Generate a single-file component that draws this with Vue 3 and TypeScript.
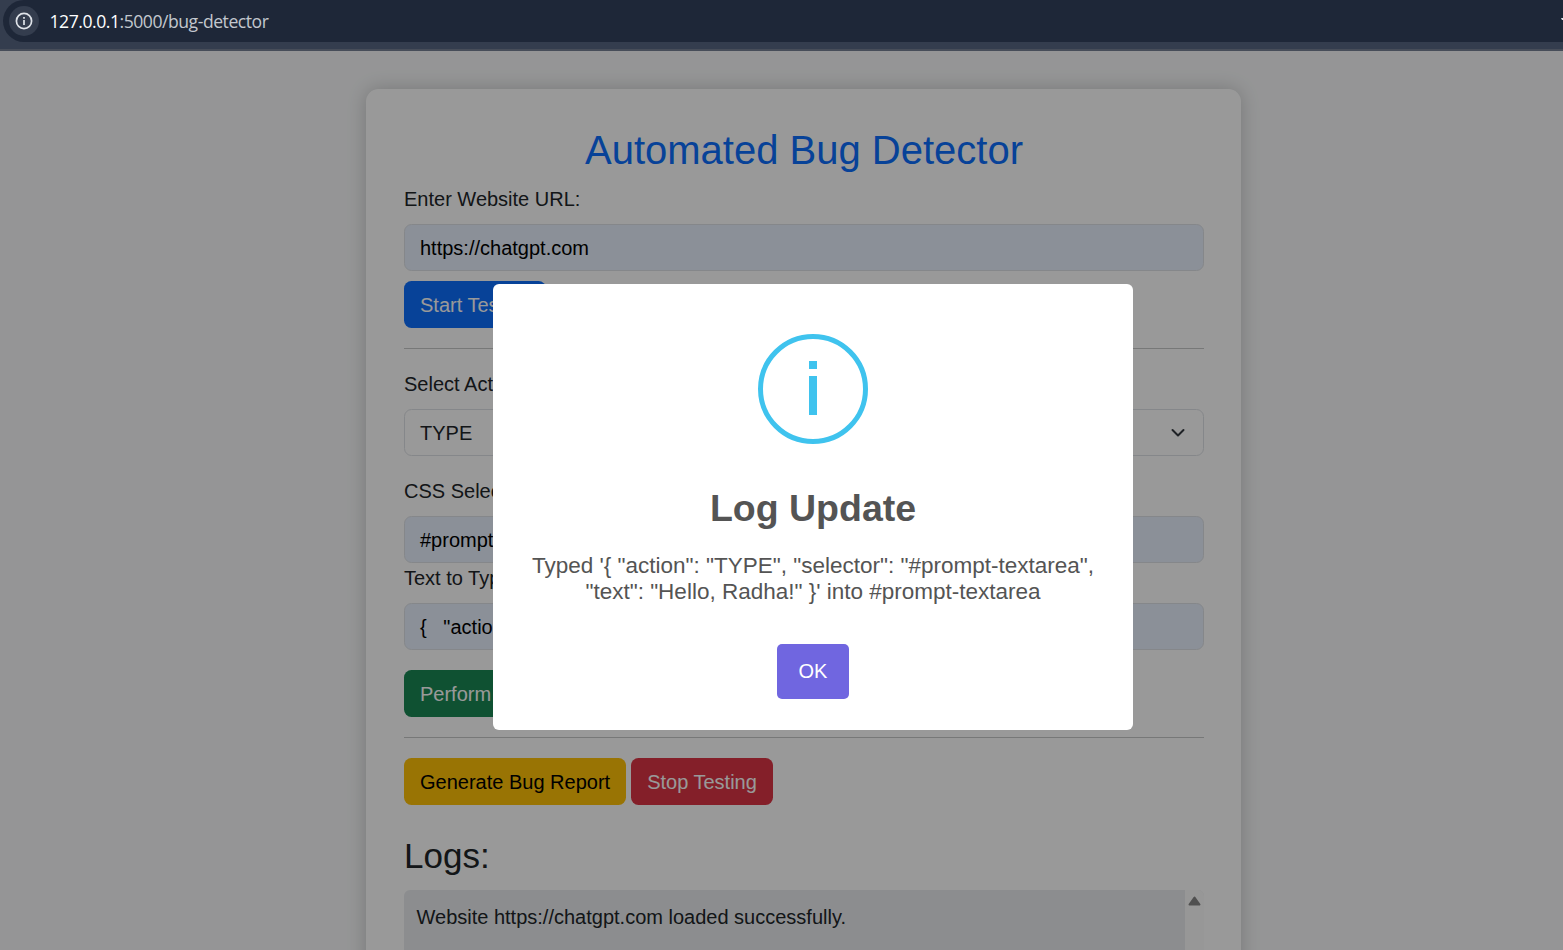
<script setup lang="ts">
const fields = {
  url: 'https://chatgpt.com',
  action: 'TYPE',
  selector: '#prompt-textarea',
  text: '{   "action": "TYPE",   "selector": "#prompt-textarea",   "text": "Hello, Radha!" }',
}
const logs: string[] = ['Website https://chatgpt.com loaded successfully.']
</script>

<template>
  <div class="screen">
    <header class="bar">
      <div class="omnibox">
        <span class="site-info">
          <svg width="18" height="18" viewBox="0 0 18 18" fill="none">
            <circle cx="9" cy="9" r="7.6" stroke="#dfe3e9" stroke-width="1.7" />
            <path d="M9 8v5M9 5v1.8" stroke="#dfe3e9" stroke-width="1.7" />
          </svg>
        </span>
        <span class="address"><span class="host">127.0.0.1</span>:5000/bug-detector</span>
        <svg class="star" width="2" height="3" viewBox="0 0 2 3"><path d="M0 0h2v2H1z" fill="#dfe3e9" /></svg>
      </div>
    </header>

    <main class="page">
      <section class="card">
        <h1>Automated Bug Detector</h1>
        <label>Enter Website URL:</label>
        <div class="control filled">{{ fields.url }}</div>
        <button class="btn primary">Start Testing</button>
        <hr />
        <label>Select Action:</label>
        <div class="control select">
          {{ fields.action }}
          <svg width="20" height="20" viewBox="0 0 20 20" fill="none" stroke="#343a40" stroke-width="2" stroke-linecap="round" stroke-linejoin="round">
            <path d="m4.5 7 5.5 5.5L15.500 7" />
          </svg>
        </div>
        <label class="spaced">CSS Selector:</label>
        <div class="control filled">{{ fields.selector }}</div>
        <label>Text to Type:</label>
        <div class="control filled">{{ fields.text }}</div>
        <button class="btn success">Perform Action</button>
        <hr />
        <div class="actions">
          <button class="btn warning">Generate Bug Report</button>
          <button class="btn danger">Stop Testing</button>
        </div>
        <h3>Logs:</h3>
        <div class="logs">
          <div class="log-list"><p v-for="line in logs" :key="line">{{ line }}</p></div>
          <div class="scroll">
            <svg width="13" height="10" viewBox="0 0 13 10"><path d="M6.5 1.500 11.500 8.500H1.500z" fill="#858585" stroke="#858585" stroke-width="2" stroke-linejoin="round" /></svg>
          </div>
        </div>
      </section>

      <div class="overlay">
        <div class="dialog">
          <div class="info-ring"><span class="info-mark"></span></div>
          <h2>Log Update</h2>
          <p class="message">Typed '{ "action": "TYPE", "selector": "#prompt-textarea",<br />"text": "Hello, Radha!" }' into #prompt-textarea</p>
          <button class="ok">OK</button>
        </div>
      </div>
    </main>
  </div>
</template>

<style>
body { margin: 0; overflow: hidden; }
</style>

<style scoped>
* { box-sizing: border-box; }
.screen {
  width: 1563px;
  height: 950px;
  overflow: hidden;
  display: flex;
  flex-direction: column;
  font: 20px/30px "Liberation Sans", Arial, sans-serif;
  color: #212529;
}
.bar {
  height: 51px;
  flex: none;
  background: #343d4e;
  border-bottom: 2px solid #474d59;
  padding-left: 3px;
}
.omnibox {
  height: 42px;
  background: #1e2738;
  border-radius: 21px 0 0 21px;
  display: flex;
  align-items: center;
  padding-left: 6px;
}
.site-info {
  width: 30px;
  height: 30px;
  border-radius: 50%;
  background: #343d4e;
  display: flex;
  align-items: center;
  justify-content: center;
}
.address {
  font: 17.6px/24px "Open Sans", "Noto Sans", sans-serif;
  letter-spacing: -0.47px;
  margin-left: 10.5px;
  color: #c3c7ce;
  white-space: nowrap;
}
.host { color: #fff; }
.star { margin: 0 0 3px auto; }
.page {
  position: relative;
  flex: 1;
  width: 1607px;
  background: #f8f9fa;
  overflow: hidden;
}
.card {
  width: 875px;
  height: 1050px;
  margin: 38px auto 0;
  padding: 37px 37px 37px 38px;
  background: #fff;
  border-radius: 12.5px;
  box-shadow: 0 0 18.75px rgba(0, 0, 0, 0.2);
  display: flex;
  flex-direction: column;
  align-items: flex-start;
}
.card > * { flex-shrink: 0; }
h1, h2, h3, p { margin: 0; font-weight: 400; }
h1 {
  width: 100%;
  font-size: 40px;
  line-height: 48px;
  text-align: center;
  color: #0d6efd;
  margin-bottom: 10px;
}
label { height: 30px; margin-bottom: 10px; white-space: nowrap; }
label.spaced { margin-top: 20px; }
.control {
  width: 100%;
  height: 47px;
  border: 1px solid #dee2e6;
  border-radius: 7.5px;
  padding: 8px 15px;
  white-space: pre;
  overflow: hidden;
}
.filled { background: #e8f0fe; color: #000; }
.select { display: flex; justify-content: space-between; align-items: center; }
.btn {
  height: 47px;
  border: 0;
  border-radius: 7.5px;
  padding: 1px 16px 0;
  font: inherit;
  color: #fff;
  white-space: nowrap;
}
.primary { background: #0d6efd; margin-top: 10px; width: 142px; }
.success { background: #198754; margin-top: 20px; }
.warning { background: #ffc107; color: #000; width: 222px; }
.danger { background: #dc3545; width: 142px; }
hr {
  width: 100%;
  height: 1px;
  border: 0;
  margin: 20px 0;
  background: #212529;
  opacity: 0.25;
}
.actions { display: flex; gap: 5px; }
h3 { font-size: 35px; line-height: 42px; margin: 30px 0 13px; }
.logs {
  width: 100%;
  height: 250px;
  display: flex;
  border-radius: 6px;
  overflow: hidden;
  background: #e9ecef;
}
.log-list { flex: 1; padding: 12px 12.5px; }
.scroll { width: 19px; background: #fcfcfc; padding: 6px 3px; display: flex; }
.overlay {
  position: absolute;
  top: 0;
  left: 0;
  width: 1626px;
  height: 899px;
  background: rgba(0, 0, 0, 0.4);
}
.dialog {
  width: 640px;
  height: 446px;
  margin: 233px auto 0;
  background: #fff;
  border-radius: 6px;
  display: flex;
  flex-direction: column;
  align-items: center;
  color: #545454;
}
.info-ring {
  width: 110px;
  height: 110px;
  margin-top: 50px;
  border: 5px solid #3fc3ee;
  border-radius: 50%;
  display: flex;
  justify-content: center;
}
.info-mark {
  width: 8px;
  height: 54px;
  margin-top: 22px;
  background: linear-gradient(#3fc3ee 8px, transparent 8px 15px, #3fc3ee 15px);
}
h2 { font-size: 37.5px; font-weight: 700; line-height: 44px; margin-top: 42px; }
.message {
  font-size: 22.5px;
  line-height: 26px;
  margin-top: 23px;
  text-align: center;
  white-space: nowrap;
}
.ok {
  width: 72px;
  height: 55px;
  margin-top: 39px;
  padding: 0 0 2px;
  border: 0;
  border-radius: 5px;
  background: #7066e0;
  color: #fff;
  font: 20px/30px "Liberation Sans", Arial, sans-serif;
}
</style>
